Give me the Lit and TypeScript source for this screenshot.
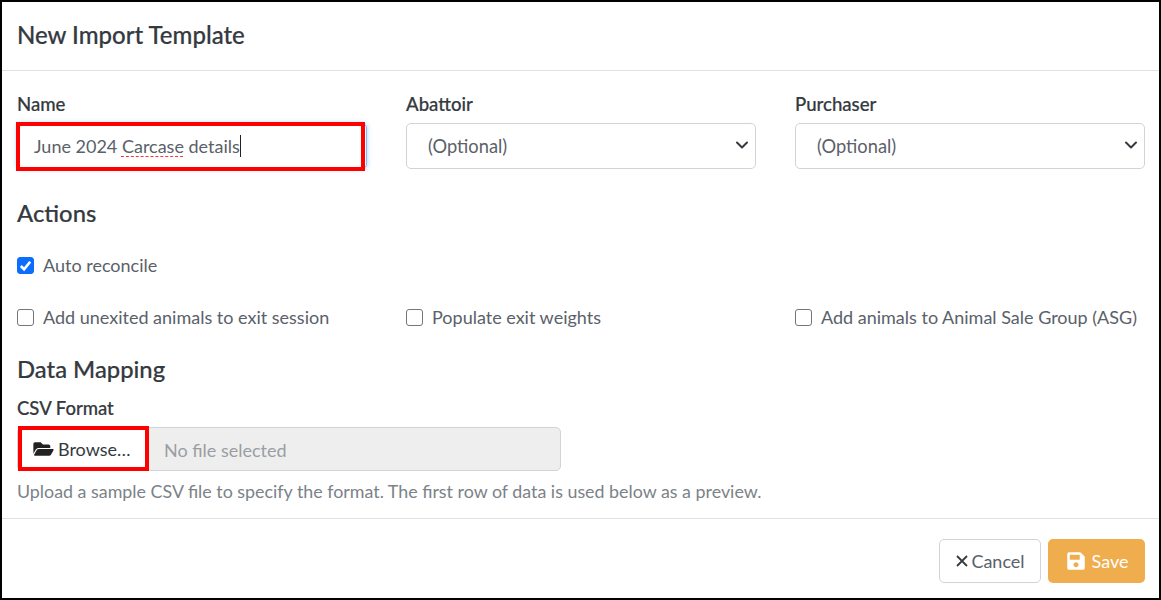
import { LitElement, html, css } from "lit";
import { customElement } from "lit/decorators.js";

const chevron = html`<svg class="chev" viewBox="0 0 14 14" width="14" height="14"><path d="M2 4.5 7 9.5l5-5" fill="none" stroke="#343a40" stroke-width="2" stroke-linecap="round" stroke-linejoin="round"/></svg>`;

@customElement("app-root")
export class AppRoot extends LitElement {
  static styles = css`
    :host { display: block; width: 1161px; height: 600px; font-family: Lato, "Liberation Sans", sans-serif; color: #495057; }
    * { box-sizing: border-box; }
    .modal { width: 1161px; height: 600px; border: 2px solid #000; background: #fff; display: flex; flex-direction: column; position: relative; overflow: hidden; }
    .head { height: 69px; border-bottom: 1px solid #dee2e6; padding: 0 15px; display: flex; align-items: center; flex: none; }
    h1 { margin: 0; font-size: 24px; font-weight: 500; color: #343a40; line-height: 1; padding-bottom: 3px; -webkit-text-stroke: 0.2px #343a40; }
    .body { flex: 1; padding: 0 14px 0 15px; }
    .cols { display: grid; grid-template-columns: repeat(3, 350px); column-gap: 39px; }
    .top { padding-top: 22px; }
    label.t { display: block; font-size: 18.6px; font-weight: 500; color: #343a40; line-height: 22px; margin-bottom: 8px; -webkit-text-stroke: 0.2px #343a40; }
    .ctl { height: 46px; border: 1px solid #ced4da; border-radius: 5px; display: flex; align-items: center; font-size: 18.3px; padding-left: 21px; background: #fff; position: relative; color: #5a6169; }
    .ctl .chev { position: absolute; right: 6px; top: 14px; }
    .focus { border-color: #80bdff; box-shadow: 0 0 4px 1px rgba(128,189,255,.5); padding-left: 16px; font-size: 18px; }
    .caret { display: inline-block; width: 1.5px; height: 22px; background: #222; }
    .sp { text-decoration: underline dashed #f33; text-decoration-thickness: 1px; text-underline-offset: 3px; }
    h2 { margin: 0; font-size: 23.8px; font-weight: 500; color: #343a40; line-height: 28px; -webkit-text-stroke: 0.2px #343a40; }
    .actions { margin-top: 30px; }
    .check { display: flex; align-items: center; gap: 9px; font-size: 18px; line-height: 22px; white-space: nowrap; color: #5a6169; }
    .box { width: 17px; height: 17px; border: 1.5px solid #767676; border-radius: 3px; flex: none; background: #fff; display: flex; align-items: center; justify-content: center; }
    .box.on { background: #0d6efd; border-color: #0d6efd; }
    .auto { margin-top: 27px; }
    .row { margin-top: 30px; }
    .mapping { margin-top: 27px; }
    .csv { margin-top: 14px; font-size: 18.5px; font-weight: 500; color: #343a40; line-height: 22px; -webkit-text-stroke: 0.2px #343a40; }
    .file { margin-top: 8px; width: 544px; height: 44px; border: 1px solid #ced4da; border-radius: 5px; display: flex; background: #eee; font-size: 18px; align-items: stretch; }
    .browse { width: 131px; background: #fff; color: #343a40; display: flex; align-items: center; gap: 4px; padding-left: 15px; flex: none; }
    .name { padding-left: 15px; padding-top: 2px; color: #9a9ea3; display: flex; align-items: center; }
    .help { margin-top: 9px; font-size: 17.85px; color: #7b8288; line-height: 22px; }
    .foot { height: 80px; border-top: 1px solid #dee2e6; flex: none; display: flex; justify-content: flex-end; align-items: center; gap: 7px; padding: 5px 14px 0 0; }
    .btn { height: 44px; border-radius: 5px; font-size: 18px; display: flex; align-items: center; justify-content: center; }
    .cancel { width: 102px; border: 1px solid #ced4da; background: #fff; gap: 2px; color: #5a6169; }
    .save { width: 97px; background: #f0ad4e; color: #fff; gap: 7px; padding-left: 2px; }
    .red { position: absolute; border: 4px solid #f00; pointer-events: none; }
    .r1 { left: 14px; top: 120px; width: 349px; height: 49px; }
    .r2 { left: 16px; top: 424px; width: 131px; height: 45px; }
  `;

  private check(text: string, on = false) {
    return html`<div class="check"><span class="box ${on ? "on" : ""}">${on ? html`<svg viewBox="0 0 16 16" width="15" height="15"><path d="M3 8.5 6.5 12 13 4" fill="none" stroke="#fff" stroke-width="2.8"/></svg>` : ""}</span>${text}</div>`;
  }

  render() {
    return html`<div class="modal">
      <div class="head"><h1>New Import Template</h1></div>
      <div class="body">
        <div class="cols top">
          <div><label class="t">Name</label><div class="ctl focus">June 2024&nbsp;<span class="sp">Carcase</span>&nbsp;details<span class="caret"></span></div></div>
          <div><label class="t">Abattoir</label><div class="ctl">(Optional)${chevron}</div></div>
          <div><label class="t">Purchaser</label><div class="ctl">(Optional)${chevron}</div></div>
        </div>
        <h2 class="actions">Actions</h2>
        <div class="auto">${this.check("Auto reconcile", true)}</div>
        <div class="cols row">
          ${this.check("Add unexited animals to exit session")}
          ${this.check("Populate exit weights")}
          ${this.check("Add animals to Animal Sale Group (ASG)")}
        </div>
        <h2 class="mapping">Data Mapping</h2>
        <div class="csv">CSV Format</div>
        <div class="file">
          <div class="browse"><svg viewBox="0 0 576 512" width="21" height="18"><path fill="#222" d="M572.694 292.093L500.27 416.248A63.997 63.997 0 0 1 444.989 448H45.025c-18.523 0-30.064-20.093-20.731-36.093l72.424-124.155A64 64 0 0 1 152 256h399.964c18.523 0 30.064 20.093 20.73 36.093zM152 224h328v-48c0-26.51-21.49-48-48-48H272l-64-64H48C21.49 64 0 85.49 0 112v278.046l69.077-118.418C86.214 242.25 117.989 224 152 224z"/></svg>Browse…</div>
          <div class="name">No file selected</div>
        </div>
        <div class="help">Upload a sample CSV file to specify the format. The first row of data is used below as a preview.</div>
      </div>
      <div class="foot">
        <div class="btn cancel"><svg viewBox="0 0 14 14" width="14" height="14"><path d="M2 2 12 12M12 2 2 12" stroke="#343a40" stroke-width="1.8" fill="none"/></svg>Cancel</div>
        <div class="btn save"><svg viewBox="0 0 448 512" width="18" height="20"><path fill="#fff" d="M433.941 129.941l-83.882-83.882A48 48 0 0 0 316.118 32H48C21.49 32 0 53.49 0 80v352c0 26.51 21.49 48 48 48h352c26.51 0 48-21.49 48-48V163.882a48 48 0 0 0-14.059-33.941zM224 416c-35.346 0-64-28.654-64-64 0-35.346 28.654-64 64-64s64 28.654 64 64c0 35.346-28.654 64-64 64zm96-304.52V212c0 6.627-5.373 12-12 12H76c-6.627 0-12-5.373-12-12V108c0-6.627 5.373-12 12-12h228.52c3.183 0 6.235 1.264 8.485 3.515l3.48 3.48A11.996 11.996 0 0 1 320 111.48z"/></svg>Save</div>
      </div>
      <div class="red r1"></div>
      <div class="red r2"></div>
    </div>`;
  }
}
